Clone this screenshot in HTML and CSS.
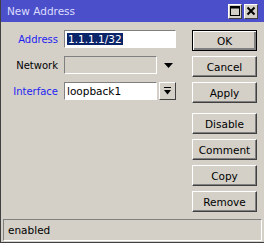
FILE: index.html
```html
<!DOCTYPE html>
<html lang="en">
<head>
    <meta charset="UTF-8">
    <title>New Address</title>
    <link rel="stylesheet" href="styles.css">
</head>
<body>

<div class="window">
    <div class="titlebar">
        <span class="title">New Address</span>
        <div class="title-buttons">
            <div class="tbtn">
                <svg width="10" height="10" viewBox="0 0 10 10"><rect x="0.5" y="0.5" width="9" height="9" fill="none" stroke="#000"/><line x1="0" y1="1.5" x2="10" y2="1.5" stroke="#000" stroke-width="2"/></svg>
            </div>
            <div class="tbtn">
                <svg width="10" height="10" viewBox="0 0 10 10"><path d="M1.5 1.5 L8.5 8.5 M8.5 1.5 L1.5 8.5" stroke="#000" stroke-width="2"/></svg>
            </div>
        </div>
    </div>

    <div class="main">
        <div class="form">
            <div class="row">
                <label class="lbl link">Address</label>
                <div class="field wide"><span class="sel">1.1.1.1/32</span></div>
            </div>
            <div class="row">
                <label class="lbl">Network</label>
                <div class="field disabled"></div>
                <svg class="arrow" width="9" height="5" viewBox="0 0 9 5"><path d="M0 0 H9 L4.5 5 Z" fill="#000"/></svg>
            </div>
            <div class="row">
                <label class="lbl link">Interface</label>
                <div class="field">loopback1</div>
                <div class="drop">
                    <svg width="7" height="8" viewBox="0 0 7 8"><rect x="0" y="0" width="7" height="1" fill="#000"/><path d="M0 3 H7 L3.5 7.5 Z" fill="#000"/></svg>
                </div>
            </div>
        </div>

        <div class="buttons">
            <div class="btn default">OK</div>
            <div class="btn">Cancel</div>
            <div class="btn">Apply</div>
            <div class="btn gap">Disable</div>
            <div class="btn">Comment</div>
            <div class="btn">Copy</div>
            <div class="btn">Remove</div>
        </div>
    </div>

    <div class="status">enabled</div>
</div>

</body>
</html>
```

FILE: styles.css
```css
* {
    box-sizing: border-box;
}
body {
    margin: 0;
    padding: 0;
    font-family: "DejaVu Sans", Verdana, sans-serif;
    font-size: 10px;
    color: #000;
}
.window {
    width: 264px;
    height: 243px;
    background-color: #d4d0c8;
    border-left: 1px solid #404040;
    border-bottom: 1px solid #404040;
    display: flex;
    flex-direction: column;
}
.titlebar {
    height: 22px;
    background-color: #4b4fc9;
    display: flex;
    align-items: center;
    justify-content: space-between;
    padding-left: 6px;
    padding-right: 6px;
}
.title {
    color: #dcdcff;
    font-size: 10.5px;
}
.title-buttons {
    display: flex;
    gap: 2px;
}
.tbtn {
    width: 14px;
    height: 15px;
    background-color: #d4d0c8;
    border-top: 1px solid #fff;
    border-left: 1px solid #fff;
    border-right: 1px solid #404040;
    border-bottom: 1px solid #404040;
    display: flex;
    align-items: center;
    justify-content: center;
}
.main {
    display: flex;
    padding-top: 8px;
    height: 197px;
}
.form {
    width: 191px;
    display: flex;
    flex-direction: column;
    gap: 8px;
}
.row {
    display: flex;
    align-items: center;
    height: 18px;
}
.lbl {
    width: 57px;
    text-align: right;
    margin-right: 6px;
}
.link {
    color: #1e1ef0;
}
.field {
    width: 93px;
    height: 18px;
    background-color: #fff;
    border-top: 1px solid #808080;
    border-left: 1px solid #808080;
    border-right: 1px solid #fff;
    border-bottom: 1px solid #fff;
    padding-left: 2px;
    font-size: 10.5px;
    line-height: 16px;
}
.field.wide {
    width: 112px;
}
.field.disabled {
    background-color: #d4d0c8;
}
.sel {
    background-color: #0a246a;
    color: #fff;
    padding: 0 1px;
}
.arrow {
    margin-left: 7px;
}
.drop {
    width: 17px;
    height: 18px;
    margin-left: 2px;
    border-top: 1px solid #fff;
    border-left: 1px solid #fff;
    border-right: 1px solid #404040;
    border-bottom: 1px solid #404040;
    display: flex;
    align-items: center;
    justify-content: center;
}
.buttons {
    width: 65px;
    display: flex;
    flex-direction: column;
    gap: 5px;
}
.btn {
    height: 21px;
    border-top: 1px solid #fff;
    border-left: 1px solid #fff;
    border-right: 1px solid #404040;
    border-bottom: 1px solid #404040;
    box-shadow: inset -1px -1px 0 #808080;
    display: flex;
    align-items: center;
    justify-content: center;
    font-size: 10.5px;
}
.btn.default {
    border: 1px solid #000;
    box-shadow: inset 1px 1px 0 #fff, inset -2px -2px 0 #808080;
}
.btn.gap {
    margin-top: 5px;
}
.status {
    margin: 0 2px 1px 2px;
    height: 22px;
    border-top: 1px solid #808080;
    border-left: 1px solid #808080;
    border-right: 1px solid #fff;
    border-bottom: 1px solid #fff;
    padding-left: 4px;
    line-height: 20px;
    font-size: 10.5px;
}
```
